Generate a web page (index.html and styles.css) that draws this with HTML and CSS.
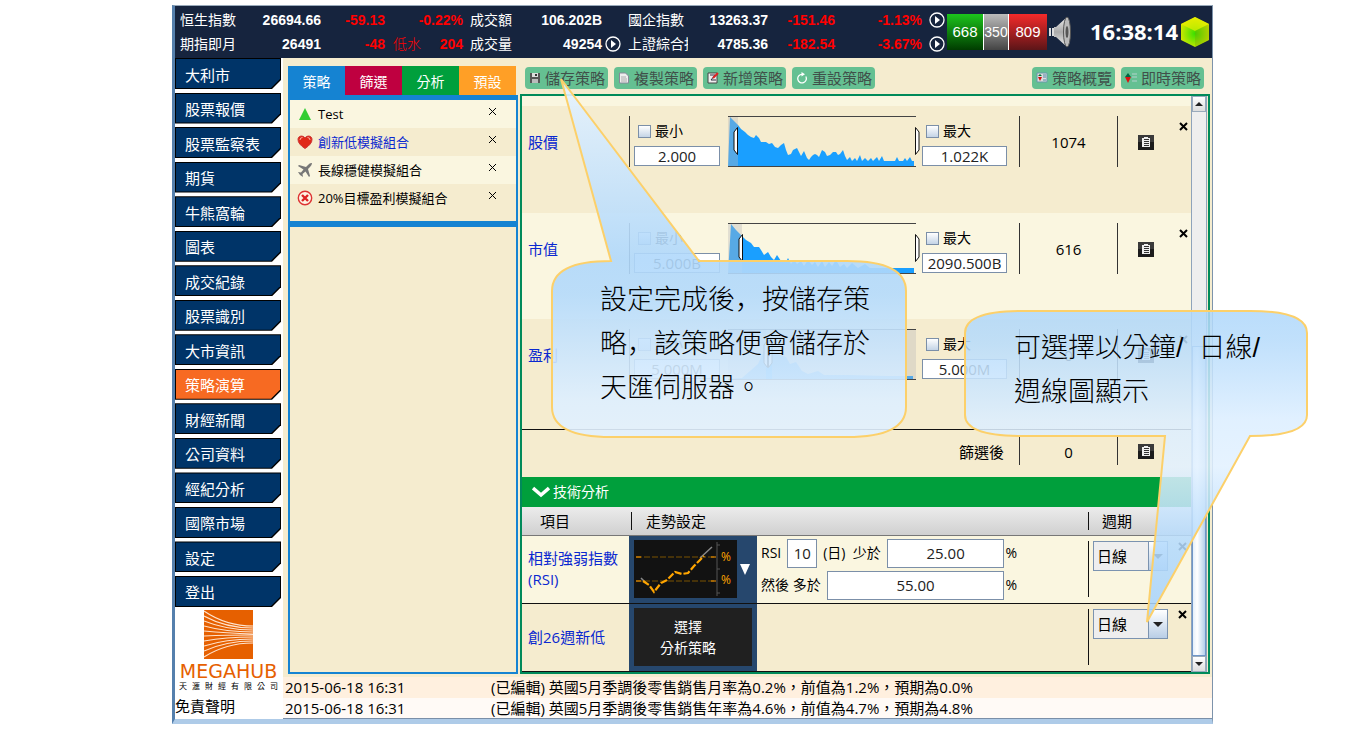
FILE: index.html
```html
<!DOCTYPE html>
<html lang="zh-Hant">
<head>
<meta charset="utf-8">
<title>MEGAHUB 策略演算</title>
<link rel="stylesheet" href="styles.css">
</head>
<body>
<svg class="defs" aria-hidden="true">
  <defs>
    <symbol id="close" viewBox="0 0 9 9"><path d="M1 1L8 8M8 1L1 8" fill="none" stroke="currentColor"/></symbol>
    <symbol id="play" viewBox="0 0 16 16"><circle cx="8" cy="8" r="7" fill="none" stroke="#fff" stroke-width="1.3"/><path d="M6 4v8l5-4z" fill="#fff"/></symbol>
    <symbol id="note" viewBox="0 0 16 15"><rect width="16" height="15" fill="#1c1c1c"/><path d="M0 0h16v7H0z" fill="#3a3a3a"/><path d="M4 3h2V2h4v1h2v9H4z" fill="#eee"/><path d="M6 4.500h5M6 6.500h5M6 8.500h5M6 10.500h5" stroke="#333"/></symbol>
    <symbol id="handle-left" viewBox="0 0 6 28"><path d="M4.500.500L1 5v18l3.500 4.500z" fill="#fff" stroke="#111"/></symbol>
    <linearGradient id="bubble" x1="0" y1="0" x2="0" y2="1"><stop offset="0" stop-color="#e6f3ff"/><stop offset=".5" stop-color="#b0d8fb"/><stop offset=".6" stop-color="#b4dafb"/><stop offset=".9" stop-color="#deefff"/><stop offset="1" stop-color="#e2f1ff"/></linearGradient>
    <linearGradient id="bubble2" x1="0" y1="0" x2="0" y2="1"><stop offset="0" stop-color="#b0d8fb"/><stop offset=".1" stop-color="#b8dcfb"/><stop offset=".35" stop-color="#dceeff"/><stop offset=".5" stop-color="#e2f1ff"/><stop offset=".75" stop-color="#b4dafc"/><stop offset="1" stop-color="#a6d2fb"/></linearGradient>
    <linearGradient id="cone" x1="0" x2="0" y1="0" y2="1"><stop offset="0" stop-color="#eee"/><stop offset=".5" stop-color="#aaa"/><stop offset="1" stop-color="#eee"/></linearGradient>
    <radialGradient id="cube" cx=".5" cy=".55" r=".55"><stop offset="0" stop-color="#38e000"/><stop offset="1" stop-color="#d8e800"/></radialGradient>
  </defs>
</svg>

<div class="app">
  <header class="top">
    <div class="quotes">
      <span>恒生指數</span><b>26694.66</b><b class="down">-59.13</b><b class="down">-0.22%</b><span class="name">成交額</span><b>106.202B</b><i></i><span>國企指數</span><b>13263.37</b><b class="down">-151.46</b><b class="down">-1.13%</b><button class="play" aria-label="播放"><svg><use href="#play"/></svg></button>
      <span>期指即月</span><b>26491</b><b class="down">-48</b><span class="basis down">低水 <b>204</b></span><span class="name">成交量</span><b>49254</b><button class="play" aria-label="播放"><svg><use href="#play"/></svg></button><span class="clip">上證綜合指</span><b>4785.36</b><b class="down">-182.54</b><b class="down">-3.67%</b><button class="play" aria-label="播放"><svg><use href="#play"/></svg></button>
    </div>
    <div class="breadth"><span class="up-box">668</span><span class="flat-box">350</span><span class="down-box">809</span></div>
    <svg class="speaker" viewBox="0 0 24 32"><path d="M0 12h2v8H0zM3 12h2v8H3z" fill="#ddd"/><path d="M5 11h2l11-10q3 0 3 15t-3 15L7 21H5z" fill="url(#cone)"/><ellipse cx="18" cy="16" rx="3.500" ry="15" fill="#bbb" stroke="#555"/><ellipse cx="18" cy="16" rx="1.500" ry="6" fill="#555"/></svg>
    <time class="clock">16:38:14</time>
    <svg class="cube" viewBox="0 0 30 32"><path d="M15 1L29 8v16L15 31 1 24V8z" fill="url(#cube)"/><path d="M1 8l14 7L29 8 15 1z" fill="#f0f000" opacity=".65"/><path d="M15 15v16l14-7V8z" fill="#7a9800" opacity=".3"/></svg>
  </header>

  <div class="body">
    <aside class="side">
      <nav class="menu">
        <button>大利市</button><button>股票報價</button><button>股票監察表</button><button>期貨</button><button>牛熊窩輪</button><button>圖表</button><button>成交紀錄</button><button>股票識別</button><button>大市資訊</button><button class="active">策略演算</button><button>財經新聞</button><button>公司資料</button><button>經紀分析</button><button>國際市場</button><button>設定</button><button>登出</button>
      </nav>
      <div class="brand">
        <svg class="logo" viewBox="0 0 49 49"><path d="M0 0h49v49H0z" fill="#e66000"/><g fill="none" stroke="#ffe3cc" stroke-width="1.100"><path d="M0 1Q22 16 49 16M0 6Q22 18 49 18M0 11Q22 20 49 20M0 16Q22 22 49 22M0 21Q22 23 49 24M0 26Q22 25 49 25M0 31Q22 27 49 27M0 36Q22 29 49 29M0 41Q22 31 49 31M0 47Q22 33 49 33"/></g></svg>
        <strong>MEGAHUB</strong>
        <small>天 滙 財 經 有 限 公 司</small>
      </div>
      <a class="disclaimer" href="#">免責聲明</a>
    </aside>

    <div class="content">
      <main class="main">
        <section class="lists">
          <div class="tabs"><button class="t1">策略</button><button class="t2">篩選</button><button class="t3">分析</button><button class="t4">預設</button></div>
          <ul class="strategies">
            <li><svg viewBox="0 0 16 16"><path d="M8 2l6 12H2z" fill="#32cd32"/></svg><span>Test</span><button aria-label="刪除"><svg><use href="#close"/></svg></button></li>
            <li class="picked"><svg viewBox="0 0 16 16"><path d="M8 14.500Q1 10 1 5.500C1 1.500 6 1 8 4c2-3 7-2.500 7 1.500Q15 10 8 14.500z" fill="#e02818" stroke="#c33"/><path d="M3 6q0-2.500 2.500-2.500M13 6q0-2.500-2.500-2.500" fill="none" stroke="#ffb0a0"/></svg><span>創新低模擬組合</span><button aria-label="刪除"><svg><use href="#close"/></svg></button></li>
            <li><svg viewBox="0 0 16 16"><path d="M15 1q-2-.500-4 2L9 5 2 3 1 4l5.500 3.500L4 10.500l-3-.500 2 3 3 2-.500-3 3-2.500L12 15l1-1-2-7 2-2q2-2 2-4z" fill="#777"/></svg><span>長線穩健模擬組合</span><button aria-label="刪除"><svg><use href="#close"/></svg></button></li>
            <li><svg viewBox="0 0 16 16"><circle cx="8" cy="8" r="6.700" fill="#fff3e4" stroke="#d33" stroke-width="1.400"/><path d="M5 5l6 6M11 5l-6 6" stroke="#d22" stroke-width="2.400"/></svg><span>20%目標盈利模擬組合</span><button aria-label="刪除"><svg><use href="#close"/></svg></button></li>
          </ul>
          <div class="blank"></div>
        </section>

        <section class="work">
          <div class="toolbar">
            <button><svg viewBox="0 0 12 12"><path d="M1 1h10v10H1z" fill="#555"/><path d="M3 1h6v4H3z" fill="#ddd"/><path d="M6 2h2v2H6z" fill="#333"/><path d="M3 7h6v4H3z" fill="#bbb"/></svg>儲存策略</button>
            <button><svg viewBox="0 0 12 12"><path d="M1.500 1h6l3 3v7h-9z" fill="#eee" stroke="#889"/><path d="M3 5h5M3 7h6M3 9h6" stroke="#999" stroke-width=".8"/></svg>複製策略</button>
            <button><svg viewBox="0 0 12 12"><path d="M1 1h9v10H1z" fill="#eee" stroke="#444"/><path d="M3 3h5L4 8h5" fill="none" stroke="#334"/><path d="M6 6l5-5" stroke="#d22" stroke-width="2"/></svg>新增策略</button>
            <button><svg viewBox="0 0 12 12"><path d="M9.800 4.500A4.300 4.300 0 1 1 6 2.300" fill="none" stroke="#fff" stroke-width="1.300"/><path d="M5.500 0l3.500 2.300L5.500 4.600z" fill="#fff"/></svg>重設策略</button>
            <button class="push"><svg viewBox="0 0 12 12"><path d="M1 1h10v9H1z" fill="#ddd" stroke="#69a"/><path d="M2 4h4L4 2z" fill="#073"/><path d="M2 5h4L4 9z" fill="#c11"/><path d="M7 3h3M7 5h3M7 8h3" stroke="#58a"/></svg>策略概覽</button>
            <button><svg viewBox="0 0 12 12"><path d="M0 5h6L3 1z" fill="#064"/><path d="M0 5h6L3 11z" fill="#d11"/><path d="M7 2h5M7 5h5M7 9h5" stroke="#9cb" stroke-width="1.500"/></svg>即時策略</button>
          </div>

          <div class="panel">
            <div class="scroll">
              <div class="filter">
                <span class="label">股價</span>
                <div class="bound min"><label><input type="checkbox">最小</label><input type="text" value="2.000" aria-label="股價最小"></div>
                <div class="chart">
                  <svg viewBox="0 0 188 51" preserveAspectRatio="none"><path d="M0 51L2 1 10 9 13 13 17 16 20 19 23 21 26 22 28 19 31 22 33 26 38 26 41 28 44 27 47 31 50 32 53 29 56 27 58 34 60 39 63 38 65 34 69 32 71 36 73 40 76 35 79 42 81 44 83 41 85 39 87 38 89 39 91 41 94 34 97 36 99 40 102 39 105 36 108 36 110 39 112 38 115 34 117 40 119 44 122 41 124 45 127 42 129 45 132 39 134 45 137 42 140 45 143 42 145 45 149 41 151 45 154 40 156 45 167 45 169 41 171 45 175 45 177 42 179 45 182 41 184 45 186 45V51z" fill="#1a9fff"/><path d="M0 0h10v51H0z" fill="#bbb" opacity=".38"/><path d="M0 .5h188M0 50.500h188" stroke="#444"/></svg>
                  <svg class="grip left"><use href="#handle-left"/></svg><svg class="grip right"><use href="#handle-left"/></svg>
                </div>
                <div class="bound max"><label><input type="checkbox">最大</label><input type="text" value="1.022K" aria-label="股價最大"></div>
                <span class="count">1074</span>
                <div class="tools"><button class="note" aria-label="清單"><svg><use href="#note"/></svg></button><button class="close" aria-label="刪除"><svg><use href="#close"/></svg></button></div>
              </div>
              <div class="filter light">
                <span class="label">市值</span>
                <div class="bound min"><label><input type="checkbox">最小</label><input type="text" value="5.000B" aria-label="市值最小"></div>
                <div class="chart">
                  <svg viewBox="0 0 188 51" preserveAspectRatio="none"><path d="M0 51L3 1 8 7 14 13 18 17 23 20 26 24 31 24 33 27 36 32 40 29 43 34 46 37 49 32 53 38 58 39 60 35 63 41 66 37 69 41 73 38 76 43 80 37 84 42 87 39 90 44 94 38 97 44 101 39 104 43 108 37 112 44 116 41 119 45 124 40 130 45 137 41 142 45 186 45V51z" fill="#1a9fff"/><path d="M0 0h14v51H0z" fill="#bbb" opacity=".38"/><path d="M0 .5h188M0 50.500h188" stroke="#444"/></svg>
                  <svg class="grip left two"><use href="#handle-left"/></svg><svg class="grip right"><use href="#handle-left"/></svg>
                </div>
                <div class="bound max"><label><input type="checkbox">最大</label><input type="text" value="2090.500B" aria-label="市值最大"></div>
                <span class="count">616</span>
                <div class="tools"><button class="note" aria-label="清單"><svg><use href="#note"/></svg></button><button class="close" aria-label="刪除"><svg><use href="#close"/></svg></button></div>
              </div>
              <div class="filter last">
                <span class="label">盈利</span>
                <div class="bound min"><label><input type="checkbox">最小</label><input type="text" value="5.000M" aria-label="盈利最小"></div>
                <div class="chart">
                  <svg viewBox="0 0 188 51" preserveAspectRatio="none"><path d="M0 50L14 49 22 42 30 35 36 22 40 8 44 22 52 26 58 28 62 35 68 33 74 42 80 45 90 42 96 46 120 46 160 47 185 47V51H0z" fill="#1a9fff"/><path d="M0 0h38v51H0zM44 0h144v51H44z" fill="#bbb" opacity=".38"/><path d="M0 .5h188M0 50.500h188" stroke="#444"/></svg>
                  <svg class="grip left three"><use href="#handle-left"/></svg><svg class="grip right three"><use href="#handle-left"/></svg>
                </div>
                <div class="bound max"><label><input type="checkbox">最大</label><input type="text" value="5.000M" aria-label="盈利最大"></div>
                <span class="count">0</span>
                <div class="tools"><button class="note" aria-label="清單"><svg><use href="#note"/></svg></button><button class="close" aria-label="刪除"><svg><use href="#close"/></svg></button></div>
              </div>
              <div class="total"><span>篩選後</span><span class="count">0</span><div class="tools"><button class="note" aria-label="清單"><svg><use href="#note"/></svg></button></div></div>

              <h2><svg viewBox="0 0 18 12"><path d="M1 2l8 7 8-7" fill="none" stroke="#fff" stroke-width="3.500"/></svg>技術分析</h2>
              <table class="tech">
                <colgroup><col class="w1"><col class="w2"><col><col class="w4"></colgroup>
                <thead><tr><th class="c1">項目</th><th colspan="2"><span class="rule">走勢設定</span></th><th class="c4"><span class="rule">週期</span></th></tr></thead>
                <tbody>
                  <tr class="light">
                    <td class="c1">相對強弱指數<br>(RSI)</td>
                    <td class="pick"><button class="thumb" aria-label="選擇走勢">
                      <svg class="spark" viewBox="0 0 103 58"><path d="M0 0h103v58H0z" fill="#121212"/><path d="M2 17h80M2 41h80" stroke="#7a5200" stroke-dasharray="6 2"/><path d="M2 17h5M77 17h5M2 41h5M77 41h5" stroke="#f90"/><path d="M83 2v54M83 5h3M83 29h3M83 53h3" stroke="#555"/><path d="M7 38l5 5M66 18l12-11" stroke="#888" stroke-width="1.500"/><path d="M9 41l6 4 5 7 7-9 6-3 8-8 7 2 6-1 6-7 6-6 4-4" fill="none" stroke="#ffa500" stroke-width="2.200" stroke-dasharray="7 2"/><text x="87" y="21">%</text><text x="87" y="44">%</text></svg>
                      <svg class="arrow" viewBox="0 0 10 11"><path d="M0 0h10L5 11z" fill="#fff"/></svg></button></td>
                    <td><div class="params"><div><label for="days">RSI</label><input id="days" class="short" value="10"><label for="below" class="days">(日)&nbsp; 少於</label><input id="below" value="25.00"><span>%</span></div><div><label for="above">然後 多於</label><input id="above" value="55.00"><span>%</span></div></div></td>
                    <td class="c4"><div class="period"><span class="combo"><select aria-label="週期"><option>日線</option><option>分鐘</option><option>週線</option></select></span><button class="close" aria-label="刪除"><svg><use href="#close"/></svg></button></div></td>
                  </tr>
                  <tr>
                    <td class="c1">創26週新低</td>
                    <td class="pick"><button class="choose">選擇<br>分析策略</button></td>
                    <td></td>
                    <td class="c4"><div class="period"><span class="combo"><select aria-label="週期"><option>日線</option><option>分鐘</option><option>週線</option></select></span><button class="close" aria-label="刪除"><svg><use href="#close"/></svg></button></div></td>
                  </tr>
                </tbody>
              </table>
            </div>
            <div class="bar"><button aria-label="向上"><svg viewBox="0 0 8 4"><path d="M0 4l4-4 4 4z"/></svg></button><div class="track"><div class="thumb-bar"></div></div><button aria-label="向下"><svg viewBox="0 0 8 4"><path d="M0 0l4 4 4-4z"/></svg></button></div>
          </div>
        </section>
      </main>
      <table class="news">
        <tr><td class="when">2015-06-18 16:31</td><td>(已編輯) 英國5月季調後零售銷售月率為0.2%，前值為1.2%，預期為0.0%</td></tr>
        <tr><td class="when">2015-06-18 16:31</td><td>(已編輯) 英國5月季調後零售銷售年率為4.6%，前值為4.7%，預期為4.8%</td></tr>
      </table>
    </div>
  </div>

  <div class="callout save">
    <svg viewBox="0 0 356 364"><path d="M60 185L10 3 148 185H296Q355 185 355 215V331Q355 361 296 361H60Q1 361 1 331V215Q1 185 60 185z" fill="url(#bubble)" fill-opacity=".9" stroke="#fcd06a" stroke-width="2"/></svg>
    <p>設定完成後<span class="comma" lang="zh-CN">，</span>按儲存策<br>略<span class="comma" lang="zh-CN">，</span>該策略便會儲存於<br>天匯伺服器。</p>
  </div>
  <div class="callout cycle">
    <svg viewBox="0 0 344 316"><path d="M58 1H286Q343 1 343 23V105Q343 126 286 126L183 312 201 126H58Q1 126 1 105V23Q1 1 58 1z" fill="url(#bubble2)" fill-opacity=".87" stroke="#fcd06a" stroke-width="2"/></svg>
    <p>可選擇以分鐘/&nbsp; 日線/<br>週線圖顯示</p>
  </div>
</div>
</body>
</html>
```

FILE: styles.css
```css
* { box-sizing: border-box; }
body {
  margin: 0;
  padding: 5px 145px 0 172px;
  background: #fff;
  color: #000;
  font: 15px/20px "Open Sans", "Noto Sans CJK TC", sans-serif;
}
button, input, select { font: inherit; color: inherit; margin: 0; }
button { border: 0; padding: 0; background: none; cursor: pointer; }
svg { display: block; }
.defs { position: absolute; width: 0; height: 0; }

.app {
  position: relative;
  min-width: 1041px;
  border-top: 1px solid #9ab;
  border-left: 3px solid #5580ad;
  border-right: 1px solid #7d93ab;
  border-bottom: 5px solid #aecbe8;
}

/* top bar */
.top { display: flex; align-items: center; height: 52px; padding: 0 2px 0 5px; background: #16243e; color: #fff; }
.quotes {
  display: grid;
  grid-template-columns: 64px 77px 64px 78px 60px 79px 26px 60px 80px 67px 87px 25px;
  grid-auto-rows: 24px;
  align-items: center;
  font-family: "Liberation Sans", "Noto Sans CJK TC", sans-serif;
  font-size: 14px;
  white-space: nowrap;
}
.quotes > b { text-align: right; }
.quotes .name { padding-left: 7px; }
.down { color: #f00; }
.basis { display: flex; justify-content: space-between; padding-left: 8px; font-weight: 300; }
.basis b { font-weight: 700; }
.clip { overflow: hidden; }
.play { padding-left: 3px; }
.quotes > .play:nth-child(12), .quotes > .play:nth-child(24) { padding-left: 7px; }
.play svg { width: 16px; height: 16px; }
.breadth { display: flex; height: 36px; line-height: 36px; text-align: center; font-family: "Liberation Sans", sans-serif; }
.breadth span { border-right: 1px solid #fff; }
.breadth .up-box { width: 37px; background: linear-gradient(#1cc41c, #003c00); }
.breadth .flat-box { width: 25px; background: linear-gradient(#bbb, #444); font-size: 14px; }
.breadth .down-box { width: 38px; border: 0; background: linear-gradient(#f42a2a, #5c1518); }
.speaker { width: 24px; height: 32px; margin-left: 2px; }
.clock { margin: 0 2px 0 auto; padding-bottom: 2px; font-size: 22px; font-weight: 700; }
.cube { width: 30px; height: 32px; }

/* side menu */
.body { display: flex; }
.side { flex: none; width: 108px; background: #fff; }
.menu { display: flex; flex-direction: column; justify-content: space-between; height: 549px; padding-right: 2px; }
.menu button { position: relative; z-index: 0; height: 31px; padding: 2px 0 0 10px; text-align: left; color: #fff; }
.menu button::before, .menu button::after {
  content: "";
  position: absolute;
  inset: 0;
  z-index: -1;
  background: #000;
  clip-path: polygon(0 0, 100% 0, 100% 22px, 97px 100%, 0 100%);
}
.menu button::after { inset: 1px; background: #003468; clip-path: polygon(0 0, 100% 0, 100% 20px, 95px 100%, 0 100%); }
.menu .active::after { background: #f76a22; }
.brand { display: flex; flex-direction: column; align-items: center; padding: 3px 5px 0 4px; }
.logo { width: 49px; height: 49px; }
.brand strong { margin-top: 2px; font: 19px/20px "DejaVu Sans", sans-serif; color: #e66000; }
.brand small { width: 100%; font-size: 8px; line-height: 10px; text-align-last: justify; }
.disclaimer { display: block; margin-top: 3px; line-height: 24px; color: #000; text-decoration: none; }

/* content */
.content { flex: 1; min-width: 0; background: #f5eccf; }
.main { display: flex; gap: 2px; padding: 8px 2px 3px 5px; }
.lists { flex: none; width: 230px; display: flex; flex-direction: column; }
.tabs { display: grid; grid-template-columns: repeat(4, 1fr); padding-right: 2px; }
.tabs button { height: 29px; padding-top: 3px; color: #fff; font-size: 14px; }
.t1 { background: #1583d2; }
.t2 { background: #bf0040; }
.t3 { background: #009f3c; }
.t4 { background: #ff9f26; }
.strategies { margin: 0; padding: 0 0 9px; list-style: none; border: solid #1583d2; border-width: 5px 2px 6px; font-size: 13px; }
.strategies li { display: flex; align-items: center; gap: 5px; height: 28px; padding: 0 19px 0 7px; }
.strategies li:nth-child(odd) { background: #faf6e0; }
.strategies li > svg { width: 16px; height: 16px; }
.strategies li button { margin: 0 0 6px auto; }
.strategies button svg { width: 9px; height: 9px; }
.picked span { color: #0a28d0; }
.blank { flex: 1; border: 2px solid #1583d2; border-top: 0; }

.work { flex: 1; min-width: 0; }
.toolbar { display: flex; gap: 6px; padding: 1px 6px 5px 5px; }
.toolbar button { display: flex; align-items: center; gap: 4px; height: 22px; padding: 0 3px 0 4px; border-radius: 4px; background: #65c092; color: #40504a; }
.toolbar svg { width: 12px; height: 12px; }
.toolbar .push { margin-left: auto; }

.panel { display: flex; border: 2px solid #008a5a; padding-right: 1px; }
.scroll { flex: 1; min-width: 0; border-top: 10px solid #faf6e0; }
.filter { display: grid; grid-template-columns: 107px 99px 1fr 103px 98px 74px; height: 107px; padding: 10px 0 46px; }
.filter.light { background: #faf6e0; height: 106px; }
.filter.last { height: 111px; border-bottom: 1px solid #111; }
.label { padding: 16px 0 0 6px; color: #0a28d0; }
.bound { padding: 5px 8px 0 5px; }
.bound.min { border-left: 1px solid #333; padding-left: 4px; }
.bound.max { padding: 5px 12px 0 6px; }
.bound label { display: flex; align-items: center; gap: 4px; height: 20px; padding-left: 4px; font-size: 14px; }
.bound [type=checkbox] { appearance: none; width: 13px; height: 13px; border: 1px solid #7b8fa8; background: linear-gradient(#fff, #c4d4e6); }
.bound [type=text], .params input { border: 1px solid #7b8fa8; background: #fff; text-align: center; color: #222; padding: 0; }
.bound [type=text] { display: block; width: 100%; height: 20px; margin-top: 5px; line-height: 18px; }
.chart { position: relative; height: 51px; }
.chart > svg:first-child { width: 100%; height: 51px; }
.chart .grip { position: absolute; top: 11px; width: 6px; height: 28px; }
.grip.left { left: 5px; }
.grip.left.two { left: 10px; }
.grip.left.three { left: 35px; }
.grip.right { right: -4px; transform: scaleX(-1); }
.grip.right.three { right: 143px; }
.count { border-left: 1px solid #333; text-align: center; padding-top: 16px; }
.tools { display: flex; padding-left: 20px; border-left: 1px solid #333; }
.note { align-self: flex-start; margin-top: 19px; }
.note svg { width: 16px; height: 15px; }
.close { align-self: flex-start; margin-top: 6px; }
.tools .close { margin-left: auto; padding-right: 3px; }
.close svg { width: 9px; height: 9px; stroke-width: 2; }
.total { display: grid; grid-template-columns: 1fr 98px 74px; height: 47px; padding: 7px 0 12px; }
.total > span:first-child { text-align: right; padding: 5px 15px 0 0; }
.total .count { padding-top: 5px; }
.total .note { margin-top: 7px; }

h2 { display: flex; align-items: center; gap: 3px; height: 30px; margin: 0; padding-left: 10px; background: #009f3c; color: #fff; font-size: 14px; font-weight: 400; }
h2 svg { width: 18px; height: 12px; }
.tech { width: 100%; border-collapse: collapse; table-layout: fixed; }
.w1 { width: 107px; }
.w2 { width: 128px; }
.w4 { width: 103px; }
.tech th { height: 28px; padding: 0; font-weight: 400; text-align: left; border-bottom: 1px solid #777; background: linear-gradient(#ececec, #d0d0d0); }
.tech th.c1 { padding-left: 18px; }
.rule { display: block; border-left: 1px solid #111; padding-left: 14px; line-height: 18px; margin-left: 2px; }
.c4 .rule { margin-left: 0; padding-left: 13px; }
.tech td { height: 68px; padding: 0; border-bottom: 1px solid #111; }
.tech td.c1 { padding-left: 6px; color: #0a28d0; line-height: 21px; }
.tech .light { background: #faf6e0; }
.tech .pick { background: #26476d; padding: 0 5px; }
.thumb { display: flex; align-items: center; gap: 3px; }
.spark { width: 103px; height: 58px; }
.spark text { fill: #ffa500; font: 12px "Open Sans", sans-serif; }
.arrow { width: 10px; height: 11px; }
.choose { display: block; width: 118px; height: 58px; padding-right: 10px; background: #202020; color: #fff; font-size: 14px; line-height: 21px; }
.params { display: flex; flex-direction: column; gap: 3px; width: 260px; padding-left: 4px; }
.params div { display: flex; align-items: center; font-size: 14px; white-space: nowrap; gap: 6px; }
.params input { flex: 1; min-width: 0; height: 29px; font-size: 15px; }
.params input.short { flex: none; width: 30px; }
.params span { margin-left: -5px; }
.period { display: flex; justify-content: space-between; height: 56px; padding: 0 4px 0 4px; border-left: 1px solid #111; }
.period .close { margin-top: 1px; }
.combo { position: relative; height: 30px; }
.combo::after { content: ""; position: absolute; right: 5px; top: 13px; border: 5px solid transparent; border-top-color: #222; border-bottom: 0; pointer-events: none; }
.combo select { appearance: none; width: 75px; height: 30px; padding: 0 0 0 3px; border: 1px solid #7b93b0; border-radius: 0; background: linear-gradient(#7b93b0, #7b93b0) 54px 0 / 1px 100% no-repeat, linear-gradient(#fff, #b9cee6) 55px 0 / 20px 100% no-repeat, #eee; }

.bar { flex: none; width: 16px; display: flex; flex-direction: column; border: solid #8ea3bb; border-width: 0 1px; background: #eee; }
.bar button { display: flex; align-items: center; justify-content: center; height: 16px; background: linear-gradient(#fff, #ddd); border: 1px solid #9ab; }
.bar svg { width: 8px; height: 4px; fill: #222; }
.track { flex: 1; display: flex; flex-direction: column; }
.thumb-bar { flex: 1; border: 1px solid #6f96c8; background: linear-gradient(90deg, #e4effa, #fff 35%, #b4cfec); }
.thumb-bar { flex: none; height: 57%; margin-top: auto; }

/* news */
.news { width: 100%; border-collapse: collapse; border-bottom: 1px solid #7b8fa8; background: #fffaf6; }
.news tr:first-child { background: #fff0df; }
.news td { height: 21px; padding: 0 0 0 2px; white-space: nowrap; }
.news .when { width: 206px; }

/* balloons */
.callout { position: absolute; pointer-events: none; }
.callout p { position: absolute; margin: 0; font: 300 27px/44px "Liberation Sans", "Noto Sans CJK TC", sans-serif; white-space: nowrap; }
.callout .comma { font-family: "Liberation Sans", "Noto Sans CJK SC", sans-serif; }
.save { left: 376px; top: 70px; width: 356px; }
.save p { left: 49px; top: 202px; }
.cycle { right: -96px; top: 304px; width: 344px; }
.cycle p { left: 50px; top: 16px; }
```
